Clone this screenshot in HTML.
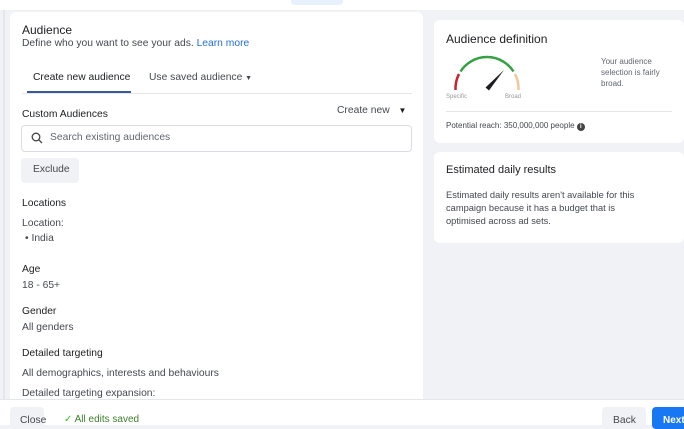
<!DOCTYPE html>
<html><head><meta charset="utf-8"><style>
*{box-sizing:border-box;margin:0;padding:0}
body{width:684px;height:425px;overflow:hidden;background:#f0f2f5;font-family:"Liberation Sans",Arial,sans-serif;color:#1c1e21;position:relative}
.abs{position:absolute}
.t{font-size:10.3px;color:#444950}
.h{font-size:10.3px;color:#1c1e21}
</style></head><body>
<div class="abs" style="left:0;top:0;width:684px;height:10px;background:#fff"></div>
<div class="abs" style="left:291px;top:0;width:52px;height:5px;background:#e7f0fd;border-radius:0 0 4px 4px"></div>
<div class="abs" style="left:0;top:10px;width:10px;height:390px;background:#f0f2f5"></div>
<div class="abs" style="left:3px;top:10px;width:2px;height:390px;background:#e4e6ea"></div>
<div class="abs" style="left:10px;top:12px;width:413px;height:390px;background:#fff;border-radius:6px 6px 0 0"></div>

<div class="abs" style="left:22px;top:23px;font-size:12px;color:#1c1e21">Audience</div>
<div class="abs t" style="left:22px;top:38px">Define who you want to see your ads. <span style="color:#216fdb">Learn more</span></div>
<div class="abs" style="left:33px;top:72px;font-size:10.3px;color:#1c1e21">Create new audience</div>
<div class="abs" style="left:27px;top:91px;width:104px;height:2px;background:#3b5998"></div>
<div class="abs t" style="left:149px;top:72px">Use saved audience <span style="font-size:7px">&#9660;</span></div>
<div class="abs" style="left:22px;top:93px;width:390px;height:1px;background:#e4e6ea"></div>
<div class="abs h" style="left:22px;top:109px">Custom Audiences</div>
<div class="abs t" style="left:337px;top:105px">Create new <span style="font-size:8px;margin-left:6px;color:#1c1e21">&#9660;</span></div>
<div class="abs" style="left:21px;top:125px;width:391px;height:27px;border:1px solid #dadde1;border-radius:4px"></div>
<svg class="abs" style="left:31px;top:132px" width="12" height="12" viewBox="0 0 12 12"><circle cx="5" cy="5" r="3.8" fill="none" stroke="#444" stroke-width="1.3"/><line x1="7.8" y1="7.8" x2="11" y2="11" stroke="#444" stroke-width="1.3"/></svg>
<div class="abs t" style="left:50px;top:132px;color:#606770">Search existing audiences</div>
<div class="abs" style="left:21px;top:158px;width:58px;height:25px;background:#f0f2f5;border-radius:4px"></div>
<div class="abs t" style="left:33px;top:164px">Exclude</div>

<div class="abs h" style="left:22px;top:198px">Locations</div>
<div class="abs t" style="left:22px;top:218px">Location:</div>
<div class="abs t" style="left:25px;top:233px">&#8226; India</div>
<div class="abs h" style="left:22px;top:264px">Age</div>
<div class="abs t" style="left:22px;top:280px">18 - 65+</div>
<div class="abs h" style="left:22px;top:306px">Gender</div>
<div class="abs t" style="left:22px;top:322px">All genders</div>
<div class="abs h" style="left:22px;top:348px">Detailed targeting</div>
<div class="abs t" style="left:22px;top:368px">All demographics, interests and behaviours</div>
<div class="abs t" style="left:22px;top:388px">Detailed targeting expansion:</div>

<div class="abs" style="left:434px;top:20px;width:250px;height:123px;background:#fff;border-radius:6px"></div>
<div class="abs" style="left:446px;top:32px;font-size:12px;color:#1c1e21">Audience definition</div>
<svg class="abs" style="left:440px;top:50px" width="90" height="55" viewBox="440 50 90 55">
<path d="M455.5 90 A31.5 31.5 0 0 1 459 74" fill="none" stroke="#c9242b" stroke-width="2.5"/>
<path d="M460.5 71.5 A31.5 31.5 0 0 1 513.5 71.5" fill="none" stroke="#36a045" stroke-width="2.5"/>
<path d="M515 74 A31.5 31.5 0 0 1 518.5 90" fill="none" stroke="#f0c99b" stroke-width="2.5"/>
<path d="M485.5 87.5 L504 70 L489 90.5 Z" fill="#1c1e21"/>
</svg>
<div class="abs" style="left:446px;top:94px;font-size:6px;color:#999">Specific</div>
<div class="abs" style="left:505px;top:94px;font-size:6px;color:#999">Broad</div>
<div class="abs" style="left:601px;top:56px;font-size:8px;color:#606770;line-height:11px">Your audience<br>selection is fairly<br>broad.</div>
<div class="abs" style="left:446px;top:111px;width:226px;height:1px;background:#e4e6ea"></div>
<div class="abs" style="left:446px;top:121px;font-size:8px;color:#444950">Potential reach: 350,000,000 people <span style="display:inline-block;width:8px;height:8px;border-radius:50%;background:#444;color:#fff;font-size:6px;text-align:center;line-height:8px;font-weight:bold">i</span></div>

<div class="abs" style="left:434px;top:152px;width:250px;height:91px;background:#fff;border-radius:6px"></div>
<div class="abs" style="left:446px;top:164px;font-size:11px;color:#1c1e21">Estimated daily results</div>
<div class="abs" style="left:446px;top:189px;font-size:9.3px;color:#444950;line-height:13px">Estimated daily results aren't available for this<br>campaign because it has a budget that is<br>optimised across ad sets.</div>

<div class="abs" style="left:0;top:399px;width:684px;height:26px;background:#fff;border-top:1px solid #e4e6ea"></div>
<div class="abs" style="left:10px;top:407px;width:34px;height:22px;background:#f0f2f5;border-radius:4px"></div>
<div class="abs t" style="left:20px;top:415px">Close</div>
<div class="abs" style="left:64px;top:414px;font-size:10px;color:#42b72a">&#10003; <span style="color:#3f7e2b">All edits saved</span></div>
<div class="abs" style="left:602px;top:407px;width:44px;height:22px;background:#f0f2f5;border-radius:4px"></div>
<div class="abs t" style="left:613px;top:415px">Back</div>
<div class="abs" style="left:652px;top:407px;width:40px;height:22px;background:#1877f2;border-radius:4px"></div>
<div class="abs" style="left:663px;top:415px;font-size:10px;color:#fff;font-weight:bold">Next</div>
</body></html>
